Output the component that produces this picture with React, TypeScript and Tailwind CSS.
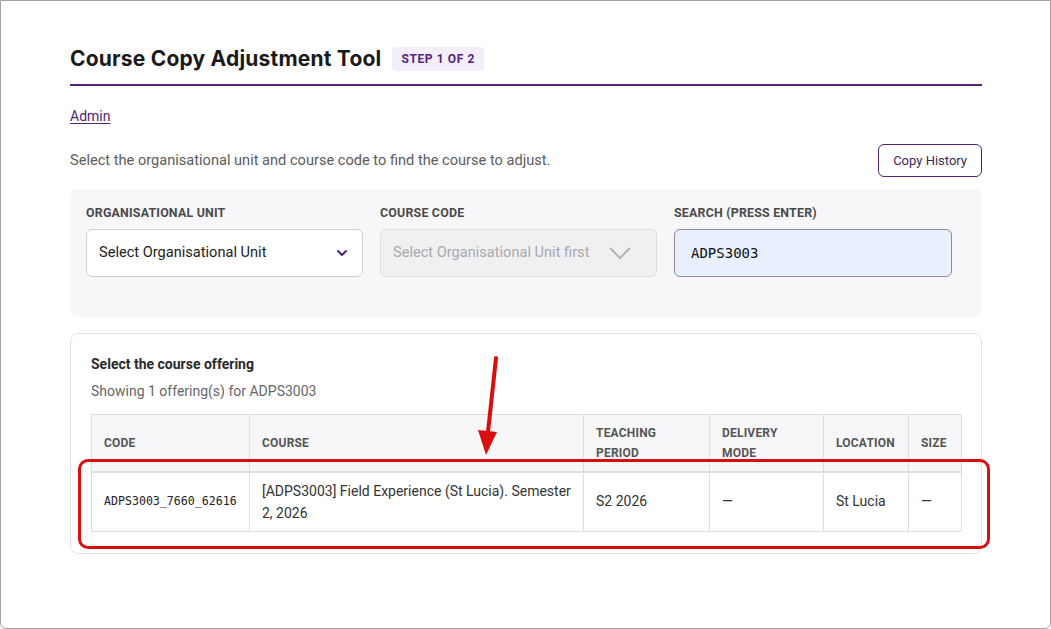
import React from "react";

const cols = [
  { label: "CODE", w: "w-[158px]" },
  { label: "COURSE", w: "w-[334px]" },
  { label: "TEACHING PERIOD", w: "w-[126px]" },
  { label: "DELIVERY MODE", w: "w-[114px]" },
  { label: "LOCATION", w: "w-[85px]" },
  { label: "SIZE", w: "w-[53px]" },
];

export default function App() {
  return (
    <div className="w-[1051px] h-[629px] bg-white overflow-hidden" style={{ fontFamily: "Roboto, 'Liberation Sans', sans-serif" }}>
      <div className="relative w-full h-full border border-[#a3a3a3] rounded-b-[6px] pl-[69px] pr-[68px] pt-[44px]">
        <div className="flex items-center gap-[11px] pb-[11px] border-b-2 border-[#51247a]">
          <h1 className="text-[21px] font-bold text-[#1a1a1a] tracking-[0.2px] leading-[28px]" style={{ fontFamily: "Inter, 'Open Sans', sans-serif" }}>
            Course Copy Adjustment Tool
          </h1>
          <span className="bg-[#f3eef8] text-[#51247a] text-[12px] font-bold tracking-[0.6px] rounded-[4px] px-[9px] h-[24px] flex items-center">
            STEP 1 OF 2
          </span>
        </div>

        <div className="mt-[20px] h-[20px] flex items-center">
          <a href="#" className="text-[14px] text-[#51247a] underline underline-offset-2">Admin</a>
        </div>

        <div className="mt-[18px] flex items-center justify-between">
          <p className="text-[14.6px] text-[#5c5c5c]">Select the organisational unit and course code to find the course to adjust.</p>
          <button className="h-[33px] px-[14px] border border-[#51247a] rounded-[6px] text-[13px] text-[#3b2a52]">Copy History</button>
        </div>

        <div className="mt-[12px] bg-[#f7f7f9] rounded-[8px] pt-[16px] pb-[40px] px-[16px]">
          <div className="flex gap-[17px]">
            <div className="w-[277px]">
              <div className="text-[12.4px] font-bold text-[#4a4a4a] tracking-[0.2px] h-[16px] leading-[16px]">ORGANISATIONAL UNIT</div>
              <div className="mt-[8px] h-[48px] bg-white border border-[#cfcfcf] rounded-[6px] flex items-center justify-between pl-[12px] pr-[14px]">
                <span className="text-[14.6px] text-[#222]">Select Organisational Unit</span>
                <svg width="12" height="8" viewBox="0 0 12 8"><path d="M2 2l4 4 4-4" stroke="#51247a" strokeWidth="2" fill="none" strokeLinecap="round" strokeLinejoin="round" /></svg>
              </div>
            </div>
            <div className="w-[277px]">
              <div className="text-[12.4px] font-bold text-[#4a4a4a] tracking-[0.2px] h-[16px] leading-[16px]">COURSE CODE</div>
              <div className="mt-[8px] h-[48px] bg-[#f0f0f2] border border-[#dedee2] rounded-[6px] flex items-center justify-between pl-[12px] pr-[24px]">
                <span className="text-[14.6px] text-[#a8a8ad]">Select Organisational Unit first</span>
                <svg width="24" height="14" viewBox="0 0 24 14"><path d="M2 2l10 10 10-10" stroke="#b4b4b8" strokeWidth="2" fill="none" /></svg>
              </div>
            </div>
            <div className="w-[278px]">
              <div className="text-[12.4px] font-bold text-[#4a4a4a] tracking-[0.2px] h-[16px] leading-[16px]">SEARCH (PRESS ENTER)</div>
              <div className="mt-[8px] h-[48px] bg-[#e8f0fe] border border-[#8c8c96] rounded-[6px] flex items-center pl-[16px]">
                <span className="text-[14px] text-[#111]" style={{ fontFamily: "'DejaVu Sans Mono', monospace" }}>ADPS3003</span>
              </div>
            </div>
          </div>
        </div>

        <div className="mt-[16px] border border-[#e3e3e6] rounded-[8px] px-[20px] pt-[20px] pb-[21px]">
          <div className="text-[14px] font-bold text-[#2a2a2a] leading-[20px]">Select the course offering</div>
          <div className="mt-[7px] text-[14px] text-[#666] leading-[20px]">Showing 1 offering(s) for ADPS3003</div>
          <table className="mt-[13px] border-collapse w-[870px] table-fixed">
            <thead>
              <tr className="bg-[#f7f7f9]">
                {cols.map((c) => (
                  <th key={c.label} className={`${c.w} h-[57px] border border-[#dedee2] border-b-2 px-[12px] text-left align-middle text-[12px] font-bold text-[#555] leading-[20px] tracking-[0.2px]`}>
                    {c.label}
                  </th>
                ))}
              </tr>
            </thead>
            <tbody>
              <tr className="bg-white text-[14px] text-[#333]">
                <td className="h-[60px] border border-[#dedee2] px-[12px] text-[11.6px] text-[#222]" style={{ fontFamily: "'DejaVu Sans Mono', monospace" }}>ADPS3003_7660_62616</td>
                <td className="border border-[#dedee2] px-[12px] leading-[22px]">[ADPS3003] Field Experience (St Lucia). Semester 2, 2026</td>
                <td className="border border-[#dedee2] px-[12px]">S2 2026</td>
                <td className="border border-[#dedee2] px-[12px]">—</td>
                <td className="border border-[#dedee2] px-[12px]">St Lucia</td>
                <td className="border border-[#dedee2] px-[12px]">—</td>
              </tr>
            </tbody>
          </table>
        </div>

        <div className="absolute left-[77px] top-[458px] w-[912px] h-[90px] border-[3px] border-[#d90f0f] rounded-[10px] pointer-events-none" />
        <svg className="absolute left-[469px] top-[351px] pointer-events-none" width="40" height="110" viewBox="0 0 40 110">
          <line x1="26" y1="6" x2="18" y2="80" stroke="#d90f0f" strokeWidth="4" strokeLinecap="round" />
          <path d="M8 78 L16 103 L27 80 Z" fill="#d90f0f" />
        </svg>
      </div>
    </div>
  );
}
